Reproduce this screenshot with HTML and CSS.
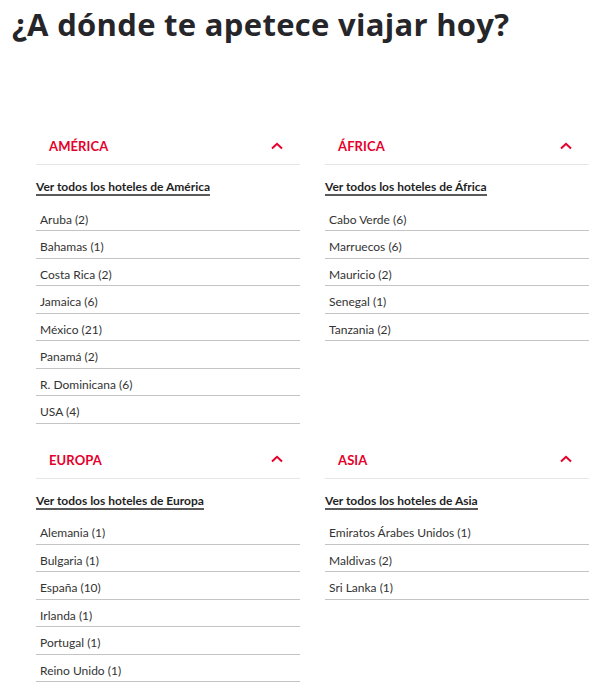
FILE: index.html
```html
<!DOCTYPE html>
<html lang="es">
<head>
<meta charset="utf-8">
<link rel="stylesheet" href="styles.css">
</head>
<body>
<h1 class="title">¿A dónde te apetece viajar hoy?</h1>
<div class="regions">
  <section class="region">
    <div class="region-head"><span class="region-name">AMÉRICA</span><svg class="chev" width="12" height="8" viewBox="0 0 12 8"><path d="M1 6.5 L6 1.8 L11 6.5" fill="none" stroke="#e4002b" stroke-width="2"/></svg></div>
    <div class="all"><a class="all-link">Ver todos los hoteles de América</a></div>
    <ul class="list">
      <li>Aruba (2)</li><li>Bahamas (1)</li><li>Costa Rica (2)</li><li>Jamaica (6)</li><li>México (21)</li><li>Panamá (2)</li><li>R. Dominicana (6)</li><li>USA (4)</li>
    </ul>
  </section>
  <section class="region">
    <div class="region-head"><span class="region-name">ÁFRICA</span><svg class="chev" width="12" height="8" viewBox="0 0 12 8"><path d="M1 6.5 L6 1.8 L11 6.5" fill="none" stroke="#e4002b" stroke-width="2"/></svg></div>
    <div class="all"><a class="all-link">Ver todos los hoteles de África</a></div>
    <ul class="list">
      <li>Cabo Verde (6)</li><li>Marruecos (6)</li><li>Mauricio (2)</li><li>Senegal (1)</li><li>Tanzania (2)</li>
    </ul>
  </section>
  <section class="region">
    <div class="region-head"><span class="region-name">EUROPA</span><svg class="chev" width="12" height="8" viewBox="0 0 12 8"><path d="M1 6.5 L6 1.8 L11 6.5" fill="none" stroke="#e4002b" stroke-width="2"/></svg></div>
    <div class="all"><a class="all-link">Ver todos los hoteles de Europa</a></div>
    <ul class="list">
      <li>Alemania (1)</li><li>Bulgaria (1)</li><li>España (10)</li><li>Irlanda (1)</li><li>Portugal (1)</li><li>Reino Unido (1)</li>
    </ul>
  </section>
  <section class="region">
    <div class="region-head"><span class="region-name">ASIA</span><svg class="chev" width="12" height="8" viewBox="0 0 12 8"><path d="M1 6.5 L6 1.8 L11 6.5" fill="none" stroke="#e4002b" stroke-width="2"/></svg></div>
    <div class="all"><a class="all-link">Ver todos los hoteles de Asia</a></div>
    <ul class="list">
      <li>Emiratos Árabes Unidos (1)</li><li>Maldivas (2)</li><li>Sri Lanka (1)</li>
    </ul>
  </section>
</div>
</body>
</html>
```
FILE: styles.css
```css
html, body {
  margin: 0;
  padding: 0;
  background: #fff;
}
body {
  font-family: "Lato", "Open Sans", sans-serif;
  color: #2b2b2b;
}
.title {
  margin: 0;
  padding: 2px 0 0 12px;
  font-family: "Open Sans", "Lato", sans-serif;
  font-size: 31px;
  line-height: 44px;
  font-weight: 700;
  letter-spacing: 0.3px;
  color: #26262a;
}
.regions {
  display: grid;
  grid-template-columns: 264px 264px;
  column-gap: 25px;
  row-gap: 18px;
  align-items: start;
  margin-top: 82px;
  padding-left: 36px;
}
.region-head {
  height: 36px;
  display: flex;
  align-items: center;
  justify-content: space-between;
  padding: 0 17px 0 13px;
  border-bottom: 1px solid #e6e6e6;
}
.region-name {
  color: #e4002b;
  font-weight: 700;
  font-size: 13px;
  letter-spacing: 0.1px;
}
.chev {
  display: block;
  margin-top: -1px;
}
.all {
  padding-top: 10px;
  padding-bottom: 7.5px;
}
.all-link {
  display: inline-block;
  font-size: 12px;
  font-weight: 700;
  line-height: 15px;
  color: #1f1f1f;
  padding-bottom: 0;
  border-bottom: 2px solid #5a5a5a;
}
.list {
  list-style: none;
  margin: 0;
  padding: 0;
}
.list li {
  font-size: 12px;
  line-height: 16.5px;
  padding: 8px 0 2px 4px;
  border-bottom: 1px solid #c4c4c4;
  color: #333;
}
```
